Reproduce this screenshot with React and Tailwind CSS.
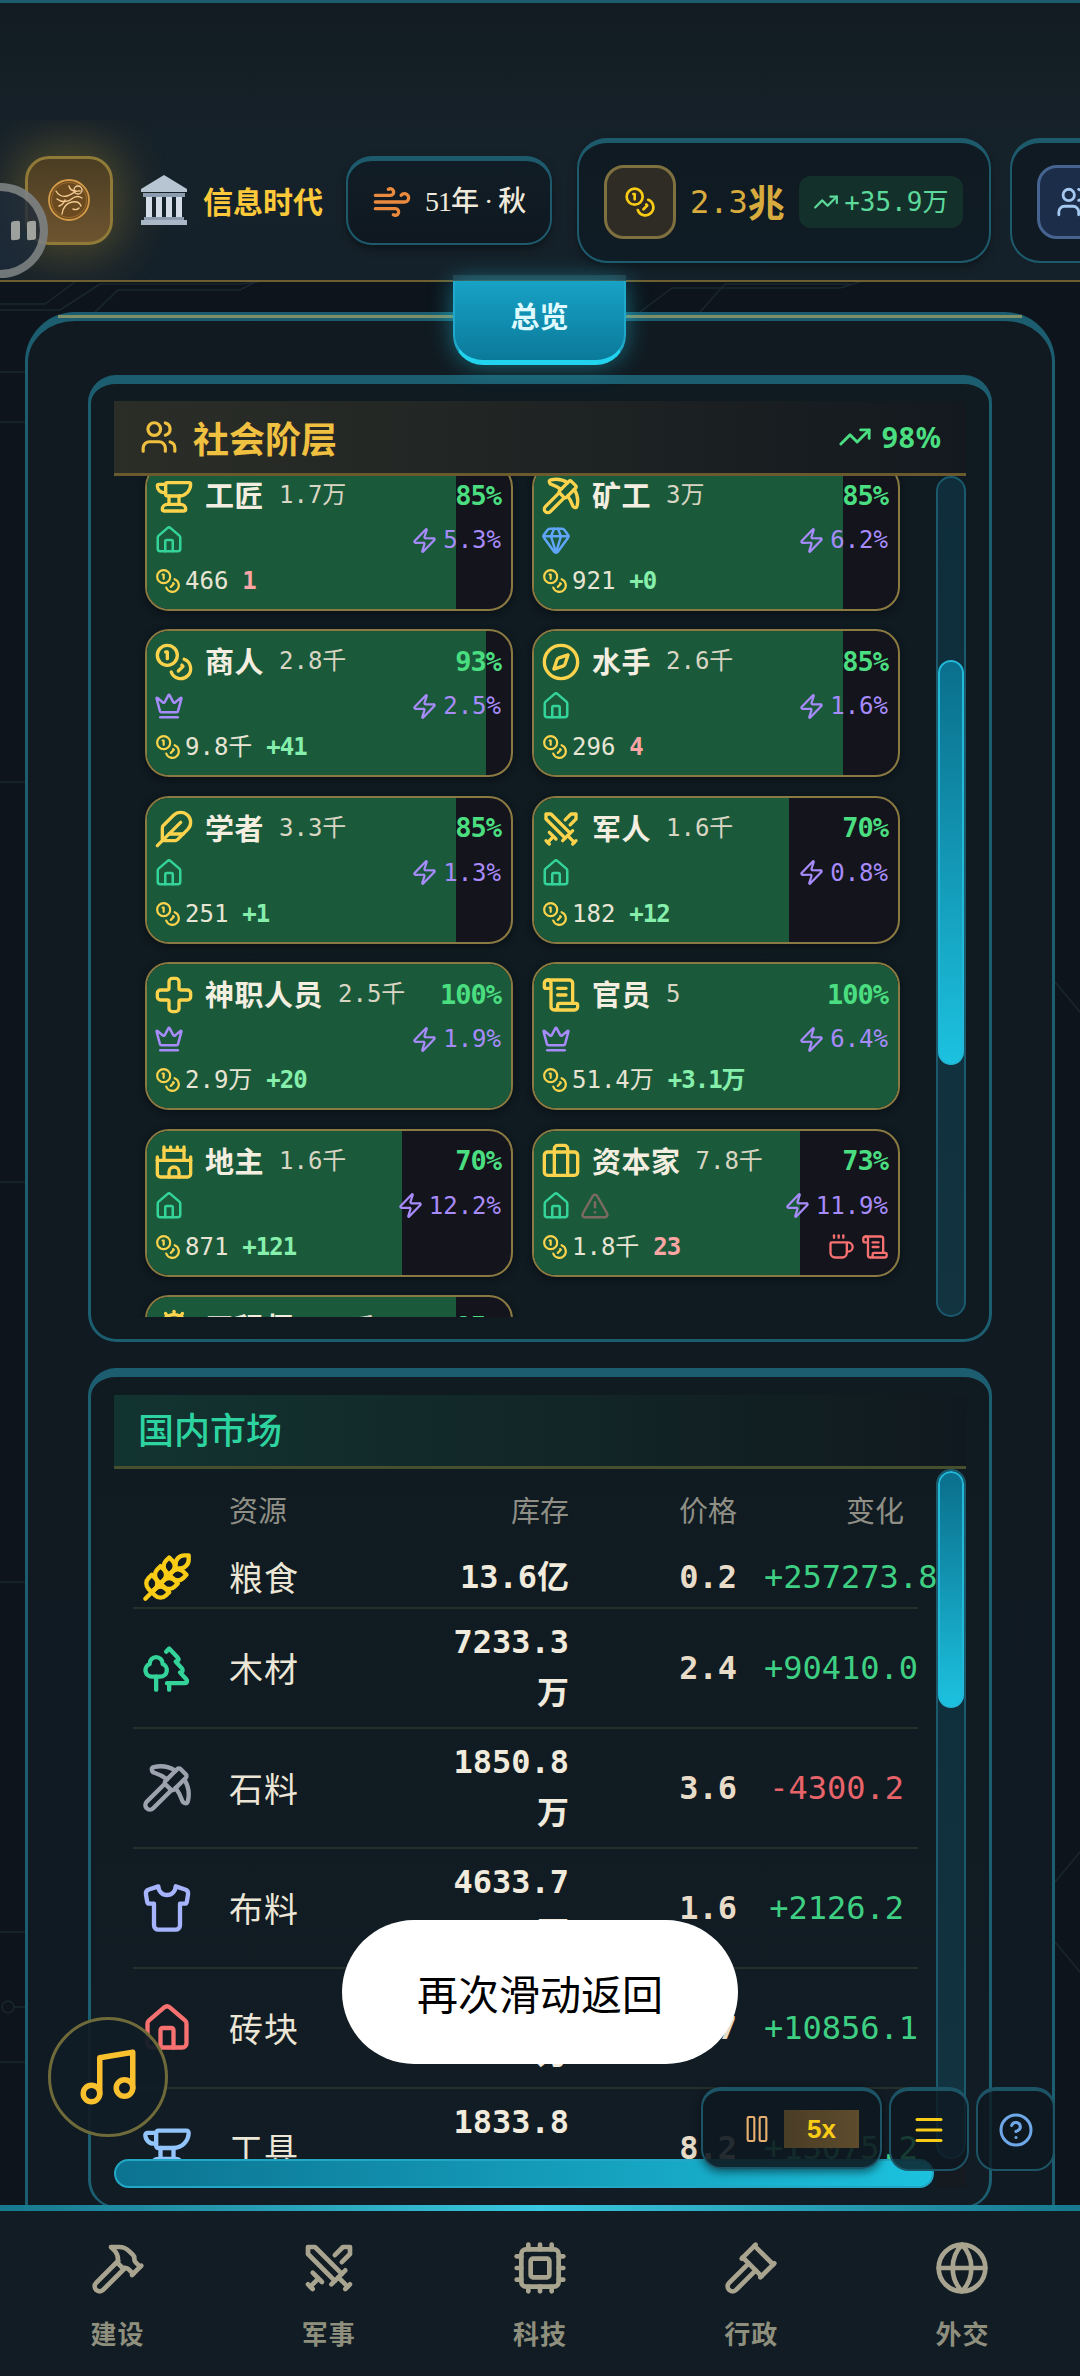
import React from 'react';
import {
  Users, TrendingUp, Coins, Wind, Anvil, Pickaxe, Gem, House, Zap, Crown, Compass, Feather, Swords, Cross,
  ScrollText, Castle, Briefcase, TriangleAlert, Coffee, Wheat, Trees, Shirt, Music, Menu, CircleHelp, Pause,
  Hammer, Cpu, Gavel, Globe, Cog,
} from 'lucide-react';

const MONO = "font-['DejaVu_Sans_Mono','Noto_Sans_CJK_SC',monospace]";
const CJK = "font-['Noto_Sans_CJK_SC',sans-serif]";

const classes = [
  { I: Anvil, name: '工匠', count: '1.7万', pct: 85, sub: [House, 'text-[#34d399]'], tax: '5.3%', coin: '466', delta: '1', up: false },
  { I: Pickaxe, name: '矿工', count: '3万', pct: 85, sub: [Gem, 'text-[#60a5fa]'], tax: '6.2%', coin: '921', delta: '+0', up: true },
  { I: Coins, name: '商人', count: '2.8千', pct: 93, sub: [Crown, 'text-[#a78bfa]'], tax: '2.5%', coin: '9.8千', delta: '+41', up: true },
  { I: Compass, name: '水手', count: '2.6千', pct: 85, sub: [House, 'text-[#34d399]'], tax: '1.6%', coin: '296', delta: '4', up: false },
  { I: Feather, name: '学者', count: '3.3千', pct: 85, sub: [House, 'text-[#34d399]'], tax: '1.3%', coin: '251', delta: '+1', up: true },
  { I: Swords, name: '军人', count: '1.6千', pct: 70, sub: [House, 'text-[#34d399]'], tax: '0.8%', coin: '182', delta: '+12', up: true },
  { I: Cross, name: '神职人员', count: '2.5千', pct: 100, sub: [Crown, 'text-[#a78bfa]'], tax: '1.9%', coin: '2.9万', delta: '+20', up: true },
  { I: ScrollText, name: '官员', count: '5', pct: 100, sub: [Crown, 'text-[#a78bfa]'], tax: '6.4%', coin: '51.4万', delta: '+3.1万', up: true },
  { I: Castle, name: '地主', count: '1.6千', pct: 70, sub: [House, 'text-[#34d399]'], tax: '12.2%', coin: '871', delta: '+121', up: true },
  { I: Briefcase, name: '资本家', count: '7.8千', pct: 73, sub: [House, 'text-[#34d399]'], warn: true, tax: '11.9%', coin: '1.8千', delta: '23', up: false, needs: true },
  { I: Cog, name: '工程师', count: '1.2千', pct: 85, sub: [House, 'text-[#34d399]'], tax: '3.1%', coin: '640', delta: '+8', up: true },
];

const goods = [
  { I: Wheat, c: 'text-[#facc15]', name: '粮食', stock: '13.6亿', price: '0.2', change: '+257273.8', up: true, h: 'h-[62px]' },
  { I: Trees, c: 'text-[#34d399]', name: '木材', stock: '7233.3万', price: '2.4', change: '+90410.0', up: true, h: 'h-[120px]' },
  { I: Pickaxe, c: 'text-[#9ca3af]', name: '石料', stock: '1850.8万', price: '3.6', change: '-4300.2', up: false, h: 'h-[120px]' },
  { I: Shirt, c: 'text-[#a5b4fc]', name: '布料', stock: '4633.7万', price: '1.6', change: '+2126.2', up: true, h: 'h-[120px]' },
  { I: House, c: 'text-[#f87171]', name: '砖块', stock: '2486.5万', price: '3.7', change: '+10856.1', up: true, h: 'h-[120px]' },
  { I: Anvil, c: 'text-[#93c5fd]', name: '工具', stock: '1833.8万', price: '8.2', change: '+13075.2', up: true, h: 'h-[120px]' },
];

const nav = [
  [Hammer, '建设'],
  [Swords, '军事'],
  [Cpu, '科技'],
  [Gavel, '行政'],
  [Globe, '外交'],
];

function ClassCard({ d }) {
  const Sub = d.sub[0];
  return (
    <div className="relative h-[148px] rounded-[24px] border-2 border-[#8a7a42] bg-[#14141c] overflow-hidden shadow-[0_2px_8px_rgba(0,0,0,0.4)]">
      <div className="absolute left-0 top-0 bottom-0 bg-[#1a5a3b]" style={{ width: `${d.pct}%` }} />
      <div className="relative flex flex-col pl-[7px] pr-[8px] pt-[8px]">
        <div className="flex items-center h-[46px] pr-[2px]">
          <d.I size={40} strokeWidth={2} className="text-[#fcd34d] shrink-0" />
          <span className={`${CJK} ml-[11px] -mt-[3px] text-[29px] font-bold tracking-[0.5px] text-[#f3eee0] leading-none`}>{d.name}</span>
          <span className={`${MONO} ml-[15px] -mt-[2px] text-[24px] text-[#d9d5c3] leading-none`}>{d.count}</span>
          <span className={`${MONO} ml-auto -mt-[2px] text-[27px] font-bold tracking-[-1px] text-[#4ade80] leading-none`}>{d.pct}%</span>
        </div>
        <div className="flex items-center h-[42px]">
          <Sub size={30} strokeWidth={2} className={d.sub[1]} />
          {d.warn && <TriangleAlert size={30} strokeWidth={2} className="ml-[9px] text-[#7c6a60]" />}
          <div className="ml-auto flex items-center gap-[5px] pr-[2px]">
            <Zap size={27} strokeWidth={2} className="text-[#a78bfa]" />
            <span className={`${MONO} text-[24px] text-[#a78bfa] leading-none`}>{d.tax}</span>
          </div>
        </div>
        <div className="flex items-center h-[40px]">
          <Coins size={26} strokeWidth={2} className="ml-[1px] text-[#fcd34d]" />
          <span className={`${MONO} ml-[4px] text-[24px] text-[#e8e4d4] leading-none`}>{d.coin}</span>
          <span className={`${MONO} ml-[14px] text-[24px] font-bold tracking-[-1px] leading-none ${d.up ? 'text-[#86efac]' : 'text-[#fca5a5]'}`}>{d.delta}</span>
          {d.needs && (
            <div className="ml-auto flex items-center gap-[6px] pr-[1px]">
              <Coffee size={28} strokeWidth={2} className="text-[#f87171]" />
              <ScrollText size={28} strokeWidth={2} className="text-[#f87171]" />
            </div>
          )}
        </div>
      </div>
    </div>
  );
}

function VTrack({ h, thumbTop, thumbH }) {
  return (
    <div className={`w-[30px] shrink-0 rounded-full border-2 border-[#1a5a6c] bg-gradient-to-b from-[#0f2d3a] to-[#123340] overflow-hidden ${h}`}>
      <div className={`rounded-full border-2 border-[#22b8d8] bg-gradient-to-b from-[#0a6f8c] to-[#1cc2e0] ${thumbTop} ${thumbH}`} />
    </div>
  );
}

function Medallion() {
  return (
    <svg width="44" height="44" viewBox="0 0 44 44" fill="none">
      <circle cx="22" cy="22" r="20" stroke="#d39a4a" strokeWidth="1.8" fill="#6b4a20" />
      <circle cx="22" cy="22" r="17.5" stroke="#a8742f" strokeWidth="0.8" />
      <path d="M9 13c3 5 7 6 11 5 5-1 8-6 13-5M10 21c5 4 12 3 16-1 3-2 6-2 9 0M15 36c1-7 5-11 10-12 5-1 8 1 9 4M22 8c1 4 3 5 7 5M12 28c3-1 5-3 6-6M26 31c2 1 4 1 6-1" stroke="#f3c98f" strokeWidth="1.4" strokeLinecap="round" />
      <circle cx="31" cy="12" r="4" stroke="#f5d0a0" strokeWidth="1.3" />
    </svg>
  );
}

function Museum() {
  return (
    <svg width="46" height="50" viewBox="0 0 46 50">
      <path d="M23 0 L46 14 L46 17 L0 17 L0 14 Z" fill="#b7c4d2" />
      <rect x="2" y="18" width="42" height="4" fill="#8c9cae" />
      <rect x="5" y="22" width="6" height="20" fill="#d5dee8" />
      <rect x="15" y="22" width="6" height="20" fill="#d5dee8" />
      <rect x="25" y="22" width="6" height="20" fill="#d5dee8" />
      <rect x="35" y="22" width="6" height="20" fill="#d5dee8" />
      <rect x="3" y="42" width="40" height="3" fill="#8c9cae" />
      <rect x="0" y="45" width="46" height="5" fill="#a9b7c6" />
    </svg>
  );
}

function Circuit() {
  return (
    <svg className="absolute inset-0" width="1080" height="1923" viewBox="0 0 1080 1923" fill="none" stroke="#1a2731" strokeWidth="1.5">
      <path d="M0 22H45L75 0" />
      <path d="M0 28H60L100 2H240L258 0" />
      <path d="M95 30L118 8H240L255 0" />
      <path d="M640 30L672 6H840L860 0" />
      <path d="M700 30L725 2H850" />
      <path d="M0 90H25M0 140H25M0 500H25M0 900H25M0 1300H25M0 1650H25M0 1780H25" />
      <path d="M1055 700L1080 730M1055 1600L1080 1570M1055 1660L1080 1690" />
      <circle cx="8" cy="1725" r="6" />
      <path d="M14 1725H25" />
    </svg>
  );
}

export default function App() {
  return (
    <div className="relative w-[1080px] h-[2376px] overflow-hidden flex flex-col bg-[#0d141b] font-['Noto_Sans','Noto_Sans_CJK_SC',sans-serif]">
      {/* Header */}
      <header className="h-[282px] shrink-0 flex flex-col border-t-[3px] border-b-2 border-t-[#1c5c6c] border-b-[#6e5f30] bg-gradient-to-b from-[#121b22] via-[#16222a] to-[#15212a]">
        <div className="h-[117px] shrink-0" />
        <div className="flex-1 flex items-center pl-[25px] overflow-hidden">
          <div className="w-[88px] h-[89px] shrink-0 flex items-center justify-center rounded-[24px] border-[3px] border-[#8f7a38] bg-gradient-to-b from-[#4a3d22] to-[#6e5430] shadow-[0_0_45px_12px_rgba(190,150,50,0.32)]">
            <Medallion />
          </div>
          <div className="ml-[28px] shrink-0"><Museum /></div>
          <span className={`${CJK} ml-[16px] shrink-0 text-[30px] font-bold text-[#fcc93a] leading-none`}>信息时代</span>
          <div className="ml-[23px] w-[206px] h-[89px] shrink-0 flex items-center pl-[24px] rounded-[26px] border-2 border-t-[5px] border-[#1d5a6c] bg-gradient-to-b from-[#111d26] to-[#0f1820] shadow-[0_4px_10px_rgba(0,0,0,0.4)]">
            <Wind size={40} strokeWidth={2} className="text-[#ea8a3e] shrink-0" />
            <span className="ml-[13px] font-['Liberation_Serif','Noto_Sans_CJK_SC',serif] text-[28px] font-medium tracking-[-1px] text-[#efe9dc] whitespace-nowrap leading-none">51年 · 秋</span>
          </div>
          <div className="ml-[25px] w-[414px] h-[125px] shrink-0 flex items-center pl-[25px] rounded-[30px] border-2 border-t-[5px] border-[#1d5a6c] bg-gradient-to-b from-[#0f1a22] to-[#101c25] shadow-[0_4px_10px_rgba(0,0,0,0.35)]">
            <div className="w-[72px] h-[74px] shrink-0 flex items-center justify-center rounded-[20px] border-[3px] border-[#7f7040] bg-[#2e2c24]">
              <Coins size={32} strokeWidth={2} className="text-[#facc15]" />
            </div>
            <span className={`${MONO} ml-[14px] flex items-center text-[32px] text-[#d8ab3e] whitespace-nowrap leading-none`}>
              2.3<span className={`${CJK} text-[37px] font-bold leading-none`}>兆</span>
            </span>
            <div className="ml-[14px] w-[164px] h-[52px] shrink-0 flex items-center justify-center gap-[5px] rounded-[12px] bg-[#14302a]">
              <TrendingUp size={26} strokeWidth={2} className="text-[#5cd89a]" />
              <span className={`${MONO} text-[26px] text-[#5cd89a] whitespace-nowrap leading-none`}>+35.9万</span>
            </div>
          </div>
          <div className="ml-[19px] w-[300px] h-[125px] shrink-0 flex items-center pl-[25px] rounded-[30px] border-2 border-t-[5px] border-[#1d5a6c] bg-[#0f1a22]">
            <div className="w-[72px] h-[74px] shrink-0 flex items-center justify-center rounded-[20px] border-[3px] border-[#46648f] bg-[#1c2d4a]">
              <Users size={34} strokeWidth={2} className="text-[#a5c8f0]" />
            </div>
          </div>
        </div>
      </header>

      {/* Main */}
      <main className="relative flex-1 overflow-hidden pt-[30px] pl-[25px]">
        <Circuit />
        <div className="relative w-[1030px] h-[1893px] rounded-t-[50px] border-x-[3px] border-t-[9px] border-[#1c5e70] bg-gradient-to-b from-[#111a21] to-[#101a22] pl-[60px] pt-[54px]">
          <div className="absolute left-[30px] right-[30px] -top-[6px] h-[3px] bg-[#7f8f68]" />

          {/* Social classes */}
          <section className="w-[904px] h-[967px] rounded-[28px] border-x-[3px] border-b-[3px] border-t-[9px] border-[#1c5e70] bg-gradient-to-b from-[#0f1a21] to-[#0f1a21] px-[23px] pt-[17px]">
            <div className="h-[75px] flex items-center pl-[26px] pr-[24px] border-b-[3px] border-[#6b5a2e] bg-gradient-to-r from-[#2b2e27] to-[#14191f]">
              <Users size={38} strokeWidth={2} className="text-[#f0c040]" />
              <h2 className={`${CJK} ml-[15px] text-[36px] font-bold text-[#f0c040] leading-none`}>社会阶层</h2>
              <TrendingUp size={34} strokeWidth={2} className="ml-auto text-[#4ade80]" />
              <span className="ml-[10px] text-[28px] font-bold tracking-[1px] text-[#4ade80] leading-none">98%</span>
            </div>
            <div className="flex h-[841px]">
              <div className="w-[822px] h-full overflow-hidden pl-[31px]">
                <div className="-mt-[13px] w-[755px] grid grid-cols-2 gap-x-[19px] gap-y-[18.4px]">
                  {classes.map((d) => <ClassCard key={d.name} d={d} />)}
                </div>
              </div>
              <VTrack h="h-[841px]" thumbTop="mt-[182px]" thumbH="h-[405px]" />
            </div>
          </section>

          {/* Market */}
          <section className="mt-[26px] w-[904px] h-[840px] overflow-hidden rounded-[28px] border-x-[3px] border-b-2 border-t-[9px] border-[#1c5e70] bg-gradient-to-b from-[#0f1a21] to-[#121c24] px-[23px] pt-[18px]">
            <div className="h-[74px] flex items-center pl-[24px] pb-[5px] border-b-[3px] border-[#46502f] bg-gradient-to-r from-[#123430] to-[#10191f]">
              <h2 className={`${CJK} text-[36px] font-medium text-[#2dd4a0] leading-none`}>国内市场</h2>
            </div>
            <div className="flex">
              <div className="w-[822px] shrink-0">
                <div className="h-[690px] overflow-hidden pl-[19px]">
                  <div className="w-[785px] h-[78px] pt-[4px] flex items-center text-[29px] text-[#8f8f85]">
                    <span className={`${CJK} ml-[96px] w-[220px]`}>资源</span>
                    <span className={`${CJK} w-[120px] text-right`}>库存</span>
                    <span className={`${CJK} ml-[108px] w-[60px] text-right`}>价格</span>
                    <span className={`${CJK} ml-[27px] w-[140px] text-right`}>变化</span>
                  </div>
                  {goods.map((g) => (
                    <div key={g.name} className={`w-[785px] flex items-center border-b-2 border-[#262f2b] pl-[12px] ${g.h}`}>
                      <g.I size={52} strokeWidth={2} className={`w-[52px] -ml-[4px] mr-[-2px] shrink-0 ${g.c}`} />
                      <span className={`${CJK} ml-[38px] w-[220px] shrink-0 text-[34px] tracking-[1px] text-[#ece6d6] leading-none`}>{g.name}</span>
                      <span className={`${MONO} w-[120px] shrink-0 text-right text-[32px] font-bold leading-[51px] text-[#f0ebdc]`}>{g.stock}</span>
                      <span className={`${MONO} ml-[108px] w-[60px] shrink-0 text-right text-[32px] font-bold leading-none text-[#e8dcc8]`}>{g.price}</span>
                      <span className={`${MONO} ml-[27px] w-[140px] shrink-0 text-right text-[32px] whitespace-nowrap leading-none ${g.up ? 'text-[#3ecf82]' : 'text-[#e8636a]'}`}>{g.change}</span>
                    </div>
                  ))}
                </div>
                <div className="w-[820px] h-[29px] rounded-full border-2 border-[#22a8c4] bg-gradient-to-r from-[#0c7391] to-[#1cc2de]" />
              </div>
              <div className="flex flex-col">
                <VTrack h="h-[690px]" thumbTop="mt-0" thumbH="h-[237px]" />
                <div className="w-[30px] h-[29px] bg-[#141a20]" />
              </div>
            </div>
          </section>
        </div>
      </main>

      {/* Bottom nav */}
      <nav className="h-[171px] shrink-0 flex flex-col bg-[#111c24]">
        <div className="h-[6px] bg-gradient-to-r from-[#17788e] via-[#38c8e0] to-[#17788e]" />
        <div className="flex-1 flex px-[12px] pt-[29px]">
          {nav.map(([I, label]) => (
            <div key={label} className="flex-1 flex flex-col items-center">
              <I size={56} strokeWidth={2} className="text-[#a8a48f]" />
              <span className={`${CJK} mt-[19px] text-[26px] font-bold tracking-[1px] text-[#8f8f7e] leading-[36px]`}>{label}</span>
            </div>
          ))}
        </div>
      </nav>

      {/* Overlays */}
      <div className="absolute left-[453px] top-[275px] w-[173px] h-[6px] bg-[#2a4650]/70" />
      <div className="absolute left-[453px] top-[281px] w-[173px] h-[84px] rounded-b-[30px] border-x-2 border-b-[5px] border-x-[#1fa9cb] border-b-[#22d3ee] bg-gradient-to-b from-[#17a2c6] to-[#0b7a9a] shadow-[0_0_24px_rgba(34,211,238,0.45)] flex items-center justify-center pb-[10px]">
        <span className={`${CJK} text-[29px] font-bold text-[#dffaff] leading-none`}>总览</span>
      </div>

      <div className="absolute -left-[47px] top-[183px] w-[95px] h-[95px] rounded-full border-[8px] border-[#b9b9b2]/55 bg-[#1d2a3a]/80 flex items-center justify-end pr-[4px] gap-[7px]">
        <div className="w-[9px] h-[19px] rounded-[2px] bg-[#c8c8c0]/75 -skew-y-6" />
        <div className="w-[9px] h-[19px] rounded-[2px] bg-[#c8c8c0]/75 -skew-y-6" />
      </div>

      <div className="absolute left-[48px] top-[2017px] w-[120px] h-[120px] rounded-full border-[3px] border-[#6f6a3a] bg-[#111c26]/95 flex items-center justify-center">
        <Music size={66} strokeWidth={2} className="text-[#fbc02d]" />
      </div>

      <div className="absolute left-[342px] top-[1920px] w-[396px] h-[144px] rounded-[72px] bg-white flex items-center justify-center">
        <span className={`${CJK} text-[41px] text-black leading-none`}>再次滑动返回</span>
      </div>

      <div className="absolute left-[701px] top-[2087px] flex gap-[7px]">
        <div className="w-[181px] h-[82px] flex items-center pl-[38px] rounded-[20px] border-2 border-t-[4px] border-[#1c5466] bg-[#0e1820]/90 shadow-[0_3px_8px_rgba(0,0,0,0.5)]">
          <Pause size={32} strokeWidth={1.6} className="text-[#e8b070]" />
          <div className="ml-[11px] w-[75px] h-[38px] flex items-center justify-center bg-gradient-to-r from-[#4a3d26] to-[#5e4c2c] font-['Liberation_Sans',sans-serif] text-[26px] font-bold text-[#facc15] leading-none">5x</div>
        </div>
        <div className="w-[80px] h-[84px] flex items-center justify-center rounded-[20px] border-2 border-t-[4px] border-[#1c5466] bg-[#0e1820]/80">
          <Menu size={36} strokeWidth={2} className="text-[#facc15]" />
        </div>
        <div className="w-[79px] h-[84px] flex items-center justify-center rounded-[20px] border-2 border-t-[4px] border-[#1c5466] bg-[#0e1820]/80">
          <CircleHelp size={36} strokeWidth={2} className="text-[#6ea8e8]" />
        </div>
      </div>
    </div>
  );
}
